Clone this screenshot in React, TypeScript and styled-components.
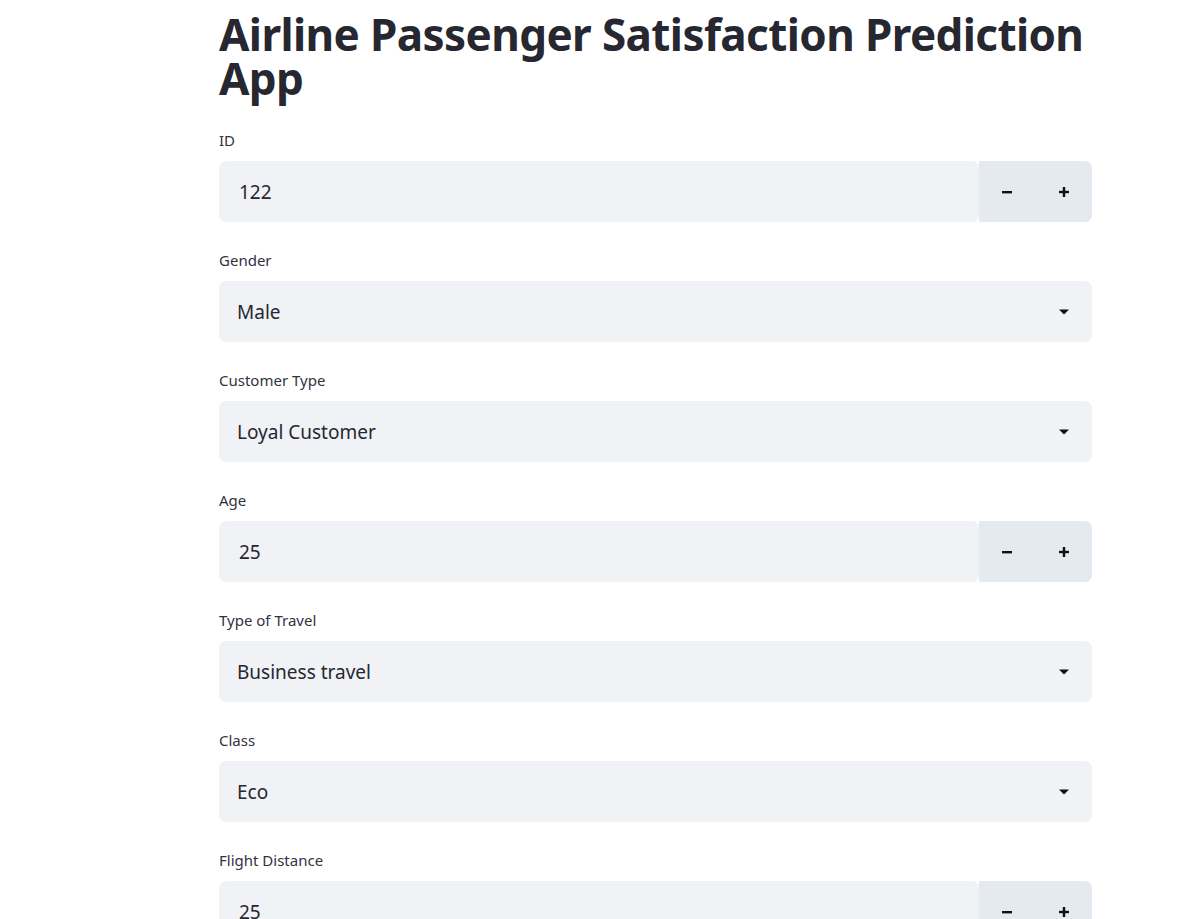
import React from "react";
import styled, { createGlobalStyle } from "styled-components";

const Global = createGlobalStyle`
  html, body { margin: 0; padding: 0; background: #ffffff; }
  body { font-family: "Noto Sans", "Open Sans", sans-serif; color: #31333f; overflow: hidden; }
`;

const Main = styled.main`
  width: 873px;
  margin-left: 219px;
  padding-top: 12px;
`;

const Title = styled.h1`
  margin: 0 0 30px 0;
  font-size: 44px;
  line-height: 44px;
  font-weight: 700;
  color: #262730;
  letter-spacing: -0.6px;
`;

const Field = styled.div`
  display: flex;
  flex-direction: column;
  margin-bottom: 28px;
`;

const Label = styled.label`
  font-size: 15px;
  line-height: 21px;
  height: 21px;
  margin-bottom: 10px;
  color: #31333f;
`;

const NumberRow = styled.div`
  display: flex;
  height: 61px;
  border-radius: 7px;
  overflow: hidden;
`;

const NumberBox = styled.div`
  flex: 1;
  display: flex;
  align-items: center;
  background: #f0f2f6;
  border-radius: 7px;
  padding-left: 20px;
  font-size: 19px;
  color: #262730;
`;

const Steppers = styled.div`
  width: 113px;
  display: flex;
  background: #e5e9f0;
`;

const StepButton = styled.div`
  flex: 1;
  display: flex;
  align-items: center;
  justify-content: center;
`;

const SelectBox = styled.div`
  display: flex;
  align-items: center;
  justify-content: space-between;
  height: 61px;
  border-radius: 7px;
  background: #f0f2f6;
  padding: 0 22px 0 18px;
  font-size: 19px;
  color: #262730;
`;

const Minus = () => (
  <svg width="12" height="12" viewBox="0 0 12 12">
    <rect x="1" y="5" width="10" height="2.4" fill="#111" />
  </svg>
);
const Plus = () => (
  <svg width="12" height="12" viewBox="0 0 12 12">
    <rect x="1" y="4.8" width="10" height="2.4" fill="#111" />
    <rect x="4.8" y="1" width="2.4" height="10" fill="#111" />
  </svg>
);
const Down = () => (
  <svg width="12" height="8" viewBox="0 0 12 8">
    <path d="M1 1.5 H11 L6 6.5 Z" fill="#111" />
  </svg>
);

type F = { label: string; value: string; kind: "num" | "sel" };
const fields: F[] = [
  { label: "ID", value: "122", kind: "num" },
  { label: "Gender", value: "Male", kind: "sel" },
  { label: "Customer Type", value: "Loyal Customer", kind: "sel" },
  { label: "Age", value: "25", kind: "num" },
  { label: "Type of Travel", value: "Business travel", kind: "sel" },
  { label: "Class", value: "Eco", kind: "sel" },
  { label: "Flight Distance", value: "25", kind: "num" },
];

export default function App() {
  return (
    <>
      <Global />
      <Main>
        <Title>Airline Passenger Satisfaction Prediction App</Title>
        {fields.map((f) => (
          <Field key={f.label}>
            <Label>{f.label}</Label>
            {f.kind === "num" ? (
              <NumberRow>
                <NumberBox>{f.value}</NumberBox>
                <Steppers>
                  <StepButton><Minus /></StepButton>
                  <StepButton><Plus /></StepButton>
                </Steppers>
              </NumberRow>
            ) : (
              <SelectBox>
                <span>{f.value}</span>
                <Down />
              </SelectBox>
            )}
          </Field>
        ))}
      </Main>
    </>
  );
}
